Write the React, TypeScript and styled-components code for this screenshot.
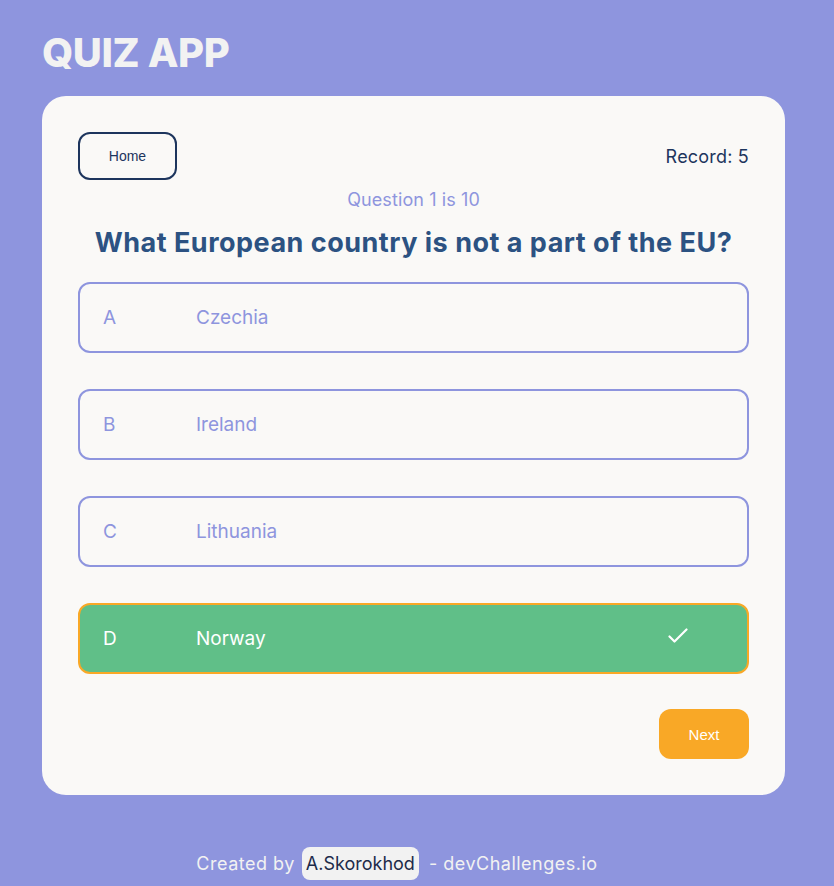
import React from "react";
import styled, { createGlobalStyle, css } from "styled-components";

const Global = createGlobalStyle`
  html, body { margin: 0; padding: 0; }
  body {
    background: #8e95de;
    font-family: Inter, "Open Sans", "Noto Sans", sans-serif;
  }
`;

const Page = styled.div`
  min-height: 886px;
  box-sizing: border-box;
  padding: 23px 0 0 42px;
`;

const Title = styled.h1`
  margin: 0 0 13px;
  font-size: 40px;
  line-height: 60px;
  font-weight: 800;
  color: #f2f2f2;
  letter-spacing: -0.4px;
`;

const Card = styled.main`
  width: 743px;
  box-sizing: border-box;
  padding: 36px;
  background: #faf9f7;
  border-radius: 24px;
  display: flex;
  flex-direction: column;
`;

const TopRow = styled.div`
  display: flex;
  justify-content: space-between;
  align-items: center;
`;

const HomeButton = styled.button`
  width: 99px;
  height: 48px;
  box-sizing: border-box;
  border: 2px solid #1d355d;
  border-radius: 12px;
  background: transparent;
  font-family: "Liberation Sans", Arial, sans-serif;
  font-size: 14px;
  color: #1d355d;
  cursor: pointer;
`;

const Record = styled.span`
  font-size: 18px;
  letter-spacing: 0.2px;
  color: #1d355d;
`;

const Counter = styled.p`
  margin: 8px 0 0;
  text-align: center;
  font-size: 18px;
  line-height: 24px;
  letter-spacing: 0.1px;
  color: #8e95de;
`;

const Question = styled.h2`
  margin: 13px 0 21px;
  text-align: center;
  font-size: 27px;
  line-height: 36px;
  font-weight: 700;
  color: #2c5282;
  letter-spacing: 0.5px;
`;

const Options = styled.div`
  display: flex;
  flex-direction: column;
  gap: 36px;
`;

const Option = styled.button<{ $correct?: boolean }>`
  height: 71px;
  box-sizing: border-box;
  display: flex;
  align-items: center;
  padding: 0 0 0 23px;
  border: 2px solid #8e95de;
  border-radius: 12px;
  background: transparent;
  color: #8e95de;
  font-family: inherit;
  font-size: 19px;
  text-align: left;
  cursor: pointer;
  ${(p) =>
    p.$correct &&
    css`
      background: #60bf88;
      border-color: #f9a826;
      color: #ffffff;
    `}
`;

const Letter = styled.span`
  width: 93px;
  flex: none;
`;

const Answer = styled.span`
  flex: 1;
`;

const Check = styled.svg`
  width: 20px;
  height: 16px;
  margin-right: 59px;
  margin-top: -5px;
`;

const Footer = styled.div`
  display: flex;
  justify-content: flex-end;
  margin-top: 35px;
`;

const NextButton = styled.button`
  width: 90px;
  height: 50px;
  border: none;
  border-radius: 12px;
  background: #f9a826;
  color: #ffffff;
  font-family: "Liberation Sans", Arial, sans-serif;
  font-size: 15px;
  cursor: pointer;
`;

const Credits = styled.footer`
  margin: 52px 0 0 -42px;
  padding-right: 40px;
  display: flex;
  justify-content: center;
  align-items: center;
  font-size: 18px;
  letter-spacing: 0.5px;
  color: #f2f2f2;
`;

const Author = styled.span`
  display: inline-flex;
  align-items: center;
  height: 33px;
  margin: 0 10px 0 7px;
  padding: 0 4px;
  border-radius: 8px;
  background: #f2f2f2;
  color: #1d2b4a;
  letter-spacing: 0;
`;

const answers = [
  { letter: "A", text: "Czechia" },
  { letter: "B", text: "Ireland" },
  { letter: "C", text: "Lithuania" },
  { letter: "D", text: "Norway", correct: true },
];

export default function App() {
  return (
    <>
      <Global />
      <Page>
        <Title>QUIZ APP</Title>
        <Card>
          <TopRow>
            <HomeButton>Home</HomeButton>
            <Record>Record: 5</Record>
          </TopRow>
          <Counter>Question 1 is 10</Counter>
          <Question>What European country is not a part of the EU?</Question>
          <Options>
            {answers.map((a) => (
              <Option key={a.letter} $correct={a.correct}>
                <Letter>{a.letter}</Letter>
                <Answer>{a.text}</Answer>
                {a.correct && (
                  <Check viewBox="0 0 20 16" fill="none">
                    <polyline
                      points="1.5,8.5 6.5,13.5 18.5,1.5"
                      stroke="#ffffff"
                      strokeWidth="2.2"
                      strokeLinecap="round"
                      strokeLinejoin="round"
                    />
                  </Check>
                )}
              </Option>
            ))}
          </Options>
          <Footer>
            <NextButton>Next</NextButton>
          </Footer>
        </Card>
        <Credits>
          Created by<Author>A.Skorokhod</Author> - devChallenges.io
        </Credits>
      </Page>
    </>
  );
}
